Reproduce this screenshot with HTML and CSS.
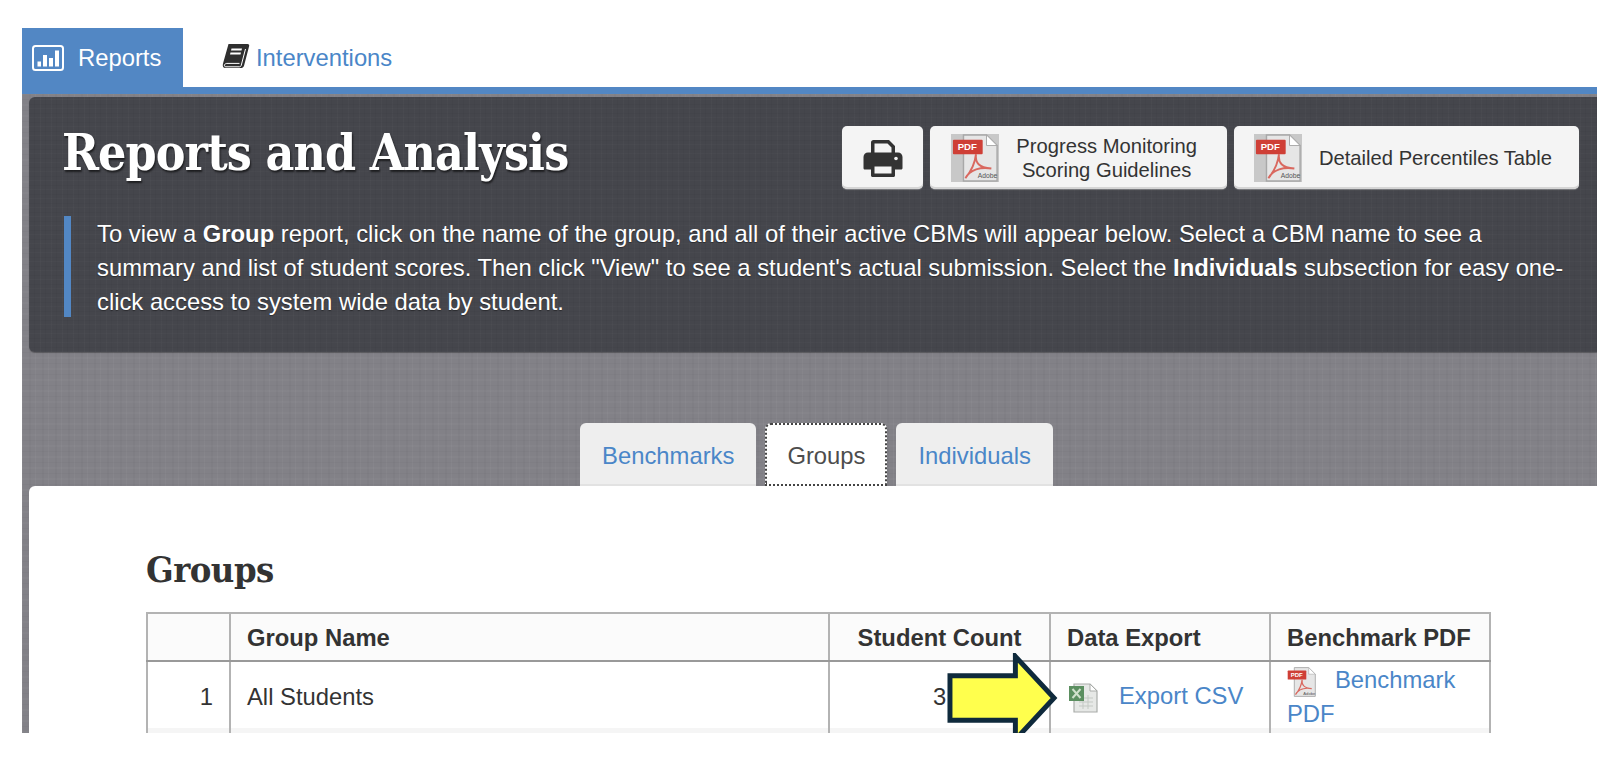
FILE: index.html
```html
<!DOCTYPE html>
<html lang="en">
<head>
<meta charset="utf-8">
<title>Reports and Analysis</title>
<link rel="stylesheet" href="styles.css">
</head>
<body>
<svg class="defs" width="0" height="0" aria-hidden="true">
  <defs>
    <symbol id="pdf" viewBox="0 0 48 50">
      <path d="M12 1h24l11 11v37H12z" fill="#e6e6e6" stroke="#a8a8a8" stroke-width="1.5"/>
      <path d="M36 1v11h11z" fill="#fff" stroke="#a8a8a8"/>
      <rect x="1" y="6" width="31" height="15" rx="1" fill="#cf3f36"/>
      <text x="16" y="17" class="pdf-label">PDF</text>
      <path d="M25 21c-1 9 3 14 16 15-11-2-22 1-27 10 5-6 10-15 11-25z" fill="none" stroke="#d9685f" stroke-width="2"/>
      <text x="27" y="46" class="adobe-label">Adobe</text>
    </symbol>
  </defs>
</svg>
<div class="app">
  <nav class="topnav">
    <a class="nav-tab nav-active">
      <svg class="ico-chart" viewBox="0 0 32 26"><rect x="1" y="1" width="30" height="24" rx="2.500" fill="none" stroke="#fff" stroke-width="2"/><path d="M5.500 16.500h3.500v5h-3.500zM11 10h4v11.500h-4zM17 13h4v8.500h-4zM23 5.500h4v16h-4z" fill="#fff"/></svg>
      Reports
    </a>
    <a class="nav-tab nav-link">
      <svg class="ico-book" viewBox="0 0 28 26"><path d="M6.500 1h19c1.500 0 2 1 1.600 2.200l-5 19.300c-.5 2-1.900 2.500-3.500 2.500H3.500C1 25 .3 23 1 20.500z" fill="#2f2f2f"/><path d="M23.500 6l-4.300 16.500c-.3 1-1 1.300-2 1.300H4c-1.300 0-1.800-.8-1.500-1.800.3-1 1.200-1.600 2.300-1.600h12.700" fill="none" stroke="#fff" stroke-width="1"/><path d="M9.500 5.500h10.500l-.5 2H9zM8.500 9.500H19l-.5 2H8z" fill="#fff"/></svg>
      Interventions
    </a>
  </nav>
  <main class="stage">
    <section class="hero">
      <div class="hero-top">
        <h1 class="hero-title">Reports and Analysis</h1>
        <div class="hero-actions">
          <a class="btn btn-print">
            <svg class="ico-print" viewBox="0 0 40 38"><path d="M8 15V3.500C8 2 9 1 10.500 1H26l6 6v8h-3.500V8.500L24.500 4.500H11.500V15z" fill="#333"/><path d="M5 13.500h30c2.500 0 4.500 2 4.500 4.500v11c0 1-.8 1.500-1.500 1.500h-6V26H8v4.500H2c-.8 0-1.500-.5-1.500-1.500V18c0-2.500 2-4.500 4.500-4.500z" fill="#333"/><path d="M8 26h24v10.500c0 .8-.7 1.500-1.500 1.500h-21C8.700 38 8 37.300 8 36.500z" fill="#333"/><rect x="11.500" y="27.500" width="17" height="7" fill="#f4f4f4"/><circle cx="33" cy="19.500" r="1.800" fill="#f4f4f4"/></svg>
          </a>
          <a class="btn btn-doc btn-doc-guides">
            <span class="pdf-tile"><svg class="ico-pdf-lg"><use href="#pdf"/></svg></span>
            <span class="btn-text">Progress Monitoring<br>Scoring Guidelines</span>
          </a>
          <a class="btn btn-doc btn-doc-table">
            <span class="pdf-tile"><svg class="ico-pdf-lg"><use href="#pdf"/></svg></span>
            <span class="btn-text">Detailed Percentiles Table</span>
          </a>
        </div>
      </div>
      <blockquote class="hero-note">To view a <b>Group</b> report, click on the name of the group, and all of their active CBMs will appear below. Select a CBM name to see a summary and list of student scores. Then click "View" to see a student's actual submission. Select the <b>Individuals</b> subsection for easy one-click access to system wide data by student.</blockquote>
    </section>
    <div class="subtabs">
      <a class="subtab">Benchmarks</a>
      <a class="subtab subtab-active">Groups</a>
      <a class="subtab">Individuals</a>
    </div>
    <section class="panel">
      <h2 class="panel-title">Groups</h2>
      <table class="grid">
        <colgroup>
          <col class="c-num"><col class="c-name"><col class="c-count"><col class="c-export"><col class="c-pdf">
        </colgroup>
        <thead>
          <tr><th></th><th>Group Name</th><th>Student Count</th><th>Data Export</th><th>Benchmark PDF</th></tr>
        </thead>
        <tbody>
          <tr>
            <td class="t-right">1</td>
            <td>All Students</td>
            <td class="t-center">3</td>
            <td><a class="cell-link cell-link-single">
              <svg class="ico-xls" viewBox="0 0 30 30"><path d="M6 1h16l7 7v21H6z" fill="#e6e8e6" stroke="#a9aca9" stroke-width="1.200"/><path d="M22 1v7h7z" fill="#fff" stroke="#a9aca9"/><path d="M11 15h14M11 19h14M11 23h14M15 12v14M20 12v14" stroke="#c4c9c4" stroke-width="1"/><rect x="1" y="3" width="15" height="15" fill="#5b8f60"/><path d="M4.500 6l8 9M12.500 6l-8 9" stroke="#cfe0cb" stroke-width="2"/></svg>Export CSV</a></td>
            <td><a class="cell-link cell-link-wrap"><svg class="ico-pdf-sm"><use href="#pdf"/></svg>Benchmark PDF</a></td>
          </tr>
          <tr class="row-alt">
            <td></td>
            <td></td>
            <td></td>
            <td></td>
            <td><svg class="ico-pdf-sm"><use href="#pdf"/></svg></td>
          </tr>
        </tbody>
      </table>
    </section>
  </main>
  <svg class="callout" viewBox="0 0 112 90"><path d="M3 22.500H69V3L108 45 69 87V67.500H3z" fill="#ffff4d" stroke="#0f2a3c" stroke-width="5"/></svg>
</div>
</body>
</html>
```
FILE: styles.css
```css
* { box-sizing: border-box; }
html, body { margin: 0; padding: 0; background: #fff; }
body {
  padding: 28px 11px 0 22px;
  height: 758px;
  overflow: hidden;
  font-family: "Liberation Sans", Arial, sans-serif;
  font-size: 23.8px;
  line-height: 33.8px;
  color: #333;
}
.defs { position: absolute; }
.pdf-label { font: bold 10px "Liberation Sans", sans-serif; fill: #fff; text-anchor: middle; }
.adobe-label { font: 7px "Liberation Sans", sans-serif; fill: #555; }

.app { position: relative; height: 705px; overflow: hidden; display: flex; flex-direction: column; }

.topnav { display: flex; flex: none; height: 66px; border-bottom: 7px solid #5287c4; }
.nav-tab { display: flex; align-items: center; height: 59px; }
.nav-active { width: 161px; background: #5287c4; color: #fff; padding-left: 10px; gap: 14px; }
.nav-link { color: #4a86c8; padding-left: 39px; gap: 6px; }
.ico-chart { width: 32px; height: 26px; }
.ico-book { width: 28px; height: 26px; margin-bottom: 4px; }

.stage {
  flex: 1;
  min-height: 0;
  padding: 3px 0 0 7px;
  background-color: #828187;
  background-image:
    repeating-linear-gradient(90deg, rgba(255,255,255,.03) 0 1px, transparent 1px 7px, rgba(0,0,0,.025) 7px 9px, transparent 9px 13px),
    repeating-linear-gradient(0deg, rgba(255,255,255,.025) 0 2px, transparent 2px 6px, rgba(0,0,0,.025) 6px 7px, transparent 7px 11px);
}

.hero {
  height: 255px;
  padding: 29px 18px 0 35px;
  border-radius: 6px 0 0 6px;
  color: #fff;
  background-color: #45464c;
  background-image:
    repeating-linear-gradient(90deg, rgba(255,255,255,.018) 0 1px, transparent 1px 5px, rgba(0,0,0,.03) 5px 6px, transparent 6px 11px),
    repeating-linear-gradient(0deg, rgba(255,255,255,.015) 0 1px, transparent 1px 4px, rgba(0,0,0,.03) 4px 5px, transparent 5px 9px);
  box-shadow: 0 1px 1px rgba(0,0,0,.3);
}
.hero-top { display: flex; justify-content: space-between; align-items: flex-start; height: 90px; }
.hero-title {
  margin: 0 0 0 -2px;
  font-family: "DejaVu Serif Condensed", "DejaVu Serif", serif;
  font-weight: bold;
  font-size: 49.500px;
  line-height: 54px;
  letter-spacing: -.9px;
  text-shadow: 1px 2px 2px rgba(0,0,0,.6);
}
.hero-actions { display: flex; gap: 7px; }
.btn {
  display: flex;
  align-items: center;
  height: 63px;
  background: #f4f4f4;
  color: #333;
  font-size: 20.200px;
  line-height: 24px;
  border-radius: 5px;
  box-shadow: 0 1px 1px rgba(255,255,255,.3), inset 0 -2px 0 #d5d5d5;
}
.btn-print { width: 81px; justify-content: center; }
.ico-print { width: 40px; height: 38px; }
.btn-doc { gap: 17px; }
.btn-doc-guides { padding: 0 30px 0 21px; }
.btn-doc-table { padding: 0 27px 0 20px; }
.btn-text { display: block; text-align: center; }
.pdf-tile { display: block; width: 48px; height: 48px; padding: 0; background: #c8c8c8; flex: none; }
.ico-pdf-lg { display: block; width: 48px; height: 48px; }

.hero-note {
  margin: 0;
  padding: 1px 0 0 26px;
  border-left: 7px solid #5287c4;
  height: 101px;
  text-shadow: 0 1px 1px rgba(0,0,0,.4);
}

.subtabs { display: flex; justify-content: center; gap: 9px; margin-top: 71px; height: 63px; padding-left: 7px; }
.subtab {
  display: block;
  padding: 16px 22px 0;
  background: #eee;
  color: #4a86c8;
  border-radius: 6px 6px 0 0;
  border-bottom: 2px solid #e2e2e2;
}
.subtab-active { background: #fff; color: #4d4d4d; border: 2px dotted #444; border-bottom: 2px dotted #444; padding: 14px 20px 0; }

.panel { height: 300px; background: #fff; border-radius: 6px 0 0 0; padding: 58px 0 0 117px; }
.panel-title {
  margin: 0 0 18px;
  font-family: "DejaVu Serif Condensed", "DejaVu Serif", serif;
  font-weight: bold;
  font-size: 36px;
  line-height: 50px;
  letter-spacing: -.5px;
  color: #333;
}

.grid { width: 1343px; table-layout: fixed; border-collapse: collapse; border: 2px solid #999; }
.c-num { width: 83px; }
.c-name { width: 599px; }
.c-count { width: 221px; }
.c-export { width: 220px; }
.c-pdf { width: 220px; }
.grid th, .grid td { border: 2px solid #b3b3b3; padding: 0 16px; vertical-align: middle; }
.grid th { height: 48px; padding-top: 2px; text-align: left; background: #fbfbfb; border-bottom-color: #999; font-weight: bold; white-space: nowrap; }
.grid th:nth-child(3) { text-align: center; padding: 2px 0 0; }
.grid td { height: 67px; padding-top: 4px; border-top: 0; border-bottom: 0; }
.cell-link { display: block; color: #4a86c8; }
.cell-link-single { margin: 0 0 2px 1px; }
.cell-link-wrap { margin: -3px 0 -3px; }
.t-right { text-align: right; }
.t-center { text-align: center; }
.row-alt td { background: #f5f5f5; vertical-align: top; padding-top: 2px; }
.ico-xls { width: 30px; height: 30px; margin-right: 21px; vertical-align: middle; }
.ico-pdf-sm { width: 29px; height: 30px; margin-right: 19px; vertical-align: middle; }

.callout { position: absolute; left: 925px; top: 625px; width: 111px; height: 90px; }
```
